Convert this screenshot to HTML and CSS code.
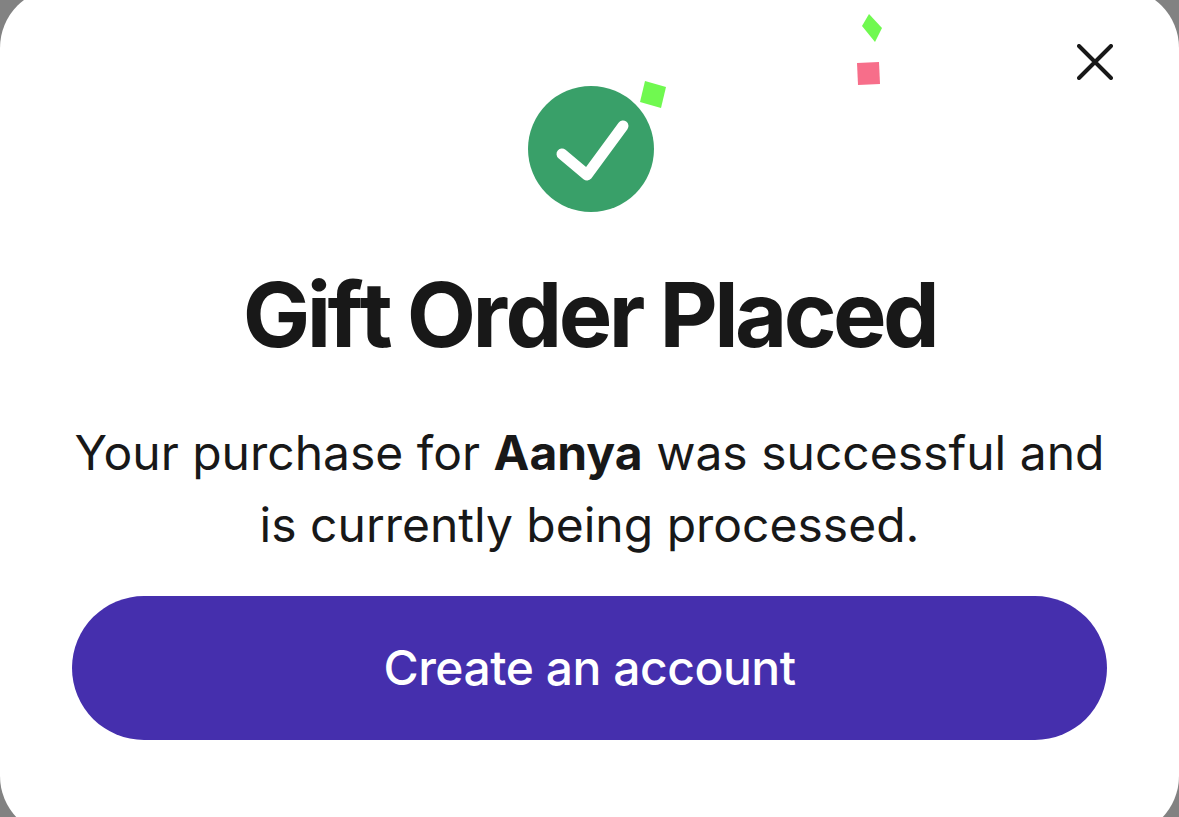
FILE: index.html
```
<!DOCTYPE html>
<html lang="en">
<head>
  <meta charset="UTF-8" />
  <meta name="viewport" content="width=device-width, initial-scale=1.0" />
  <title>Gift Order Placed</title>
  <link rel="stylesheet" href="styles.css">
</head>
<body>
  <main class="modal" role="dialog" aria-labelledby="modalTitle">
    <button class="close" type="button" aria-label="Close">
      <svg viewBox="0 0 36 36" fill="none" stroke="currentColor" stroke-width="4" stroke-linecap="round">
        <path d="M2 2 34 34M34 2 2 34" />
      </svg>
    </button>

    <svg class="check" viewBox="0 0 128 126" fill="none" aria-hidden="true">
      <circle cx="65" cy="63" r="63" fill="#39a069" />
      <path d="M36 68 61 89 97 40" stroke="#fff" stroke-width="11" stroke-linecap="round" stroke-linejoin="round" />
    </svg>

    <h1 id="modalTitle">Gift Order Placed</h1>
    <p>Your purchase for <strong>Aanya</strong> was successful and is currently being processed.</p>
    <button class="primary" type="button">Create an account</button>

    <!-- confetti -->
    <svg class="confetti" viewBox="0 0 244 96" aria-hidden="true">
      <path fill="#70f950" d="M4 69 25 75 20 96 -1 90Z" />
      <path fill="#70f950" d="M228 2 241 16 234 30 221 14Z" />
      <path fill="#f76e8a" d="M216 51 238 50 239 72 217 73Z" />
    </svg>
  </main>
</body>
</html>
```
FILE: styles.css
```
* { box-sizing: border-box; }
body {
  margin: 0;
  min-height: 100vh;
  overflow: hidden;
  background: #828282;
  color: #181818;
  font-family: Inter, sans-serif;
}
.modal {
  position: relative;
  display: flex;
  flex-direction: column;
  align-items: center;
  margin: -12px 0;
  padding: 98px 72px 96px;
  border-radius: 60px;
  background: white;
  text-align: center;
}
button {
  border: 0;
  font-family: inherit;
  cursor: pointer;
}
.close {
  position: absolute;
  top: 44px;
  right: 54px;
  width: 60px;
  height: 60px;
  padding: 12px;
  background: none;
  color: #181818;
}
.close svg { display: block; width: 36px; height: 36px; }
.check { width: 128px; height: 126px; }
h1 {
  margin: 49px 0 48px;
  font-size: 90px;
  line-height: 108px;
  font-weight: 700;
  font-kerning: none;
  letter-spacing: -0.04em;
}
p {
  margin: 0 0 35px;
  font-size: 48px;
  line-height: 72px;
}
.primary {
  width: 100%;
  padding: 36px;
  border-radius: 72px;
  background: #452fad;
  color: white;
  font-size: 48px;
  line-height: 72px;
  font-weight: 500;
  letter-spacing: -0.01em;
}
.confetti {
  position: absolute;
  top: 24px;
  left: calc(50% + 51px);
  width: 244px;
  height: 96px;
  overflow: visible;
  pointer-events: none;
}
```
